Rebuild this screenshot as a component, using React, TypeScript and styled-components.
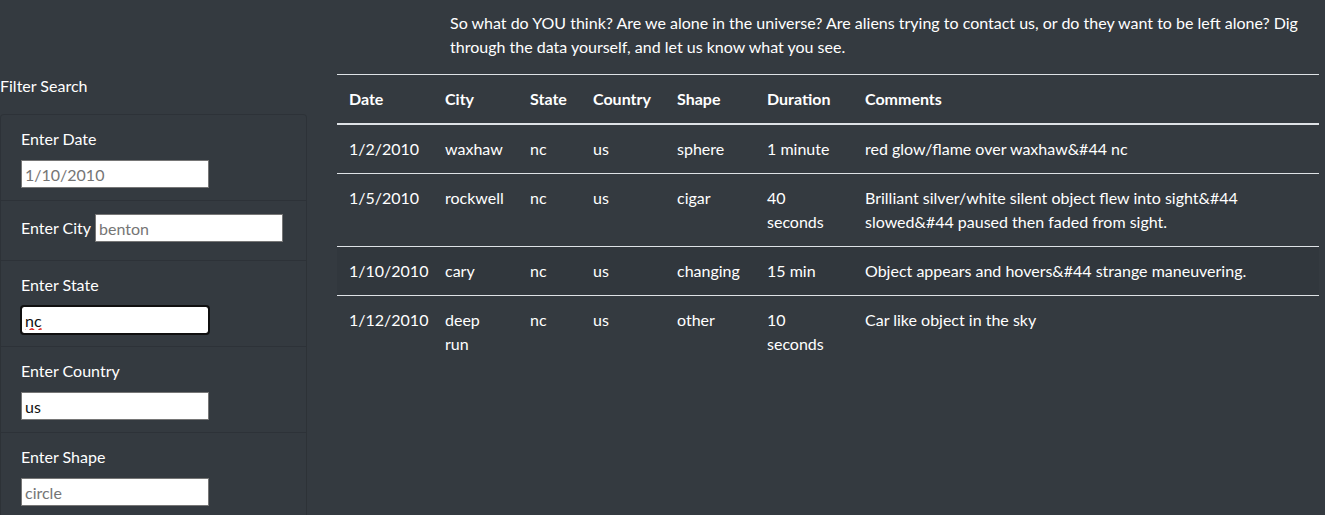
import styled, { createGlobalStyle } from "styled-components";

const GlobalStyle = createGlobalStyle`
  body {
    margin: 0;
    background: #343a40;
    color: #fff;
    font-family: Lato, "Liberation Sans", sans-serif;
    font-size: 16px;
    line-height: 1.5;
  }
`;

const Page = styled.div`
  min-height: 515px;
`;

const Intro = styled.p`
  margin: 0 0 15px;
  padding: 11px 20px 0 450px;
`;

const Main = styled.div`
  display: grid;
  grid-template-columns: 307px 982px;
  column-gap: 30px;
  align-items: start;
`;

const Sidebar = styled.aside``;

const SidebarTitle = styled.div`
  margin-bottom: 16px;
`;

const FilterList = styled.ul`
  list-style: none;
  margin: 0;
  padding: 0;
  border: 1px solid rgba(0, 0, 0, 0.125);
  border-bottom: 0;
  border-radius: 4px 4px 0 0;
`;

const FilterItem = styled.li<{ $inline?: boolean }>`
  display: ${(p) => (p.$inline ? "flex" : "block")};
  align-items: center;
  gap: 4px;
  padding: ${(p) => (p.$inline ? "13px 20px 18px" : "12px 20px")};
  border-bottom: 1px solid rgba(0, 0, 0, 0.125);
`;

const FilterLabel = styled.label<{ $inline?: boolean }>`
  display: block;
  margin-bottom: ${(p) => (p.$inline ? "0" : "9px")};
`;

const FilterInput = styled.input<{ $focused?: boolean }>`
  box-sizing: border-box;
  width: 188px;
  height: 28px;
  padding: 1px 3px;
  font-family: Lato, "Liberation Sans", sans-serif;
  font-size: 16px;
  color: #111;
  background: #fff;
  border: 1px solid #767676;
  border-radius: ${(p) => (p.$focused ? "3px" : "0")};
  outline: ${(p) => (p.$focused ? "2px solid #101010" : "none")};
  outline-offset: -1px;
  text-decoration: ${(p) => (p.$focused ? "underline wavy #e02020" : "none")};

  &::placeholder {
    color: #757575;
  }
`;

const DataTable = styled.table`
  width: 982px;
  border-collapse: collapse;
  table-layout: fixed;
  color: #fff;
`;

const HeadCell = styled.th`
  padding: 12px;
  text-align: left;
  font-weight: 700;
  vertical-align: bottom;
  border-top: 1px solid #dee2e6;
  border-bottom: 2px solid #dee2e6;
`;

const Row = styled.tr<{ $shaded?: boolean }>`
  background: ${(p) => (p.$shaded ? "rgba(0, 0, 0, 0.04)" : "transparent")};
`;

const Cell = styled.td`
  padding: 12px;
  vertical-align: top;
  border-top: 1px solid #dee2e6;
`;

const columns = [
  { label: "Date", width: 96 },
  { label: "City", width: 85 },
  { label: "State", width: 63 },
  { label: "Country", width: 84 },
  { label: "Shape", width: 90 },
  { label: "Duration", width: 98 },
  { label: "Comments", width: 466 },
];

const sightings = [
  ["1/2/2010", "waxhaw", "nc", "us", "sphere", "1 minute", "red glow/flame over waxhaw&#44 nc"],
  [
    "1/5/2010",
    "rockwell",
    "nc",
    "us",
    "cigar",
    "40 seconds",
    "Brilliant silver/white silent object flew into sight&#44 slowed&#44 paused then faded from sight.",
  ],
  ["1/10/2010", "cary", "nc", "us", "changing", "15 min", "Object appears and hovers&#44 strange maneuvering."],
  ["1/12/2010", "deep run", "nc", "us", "other", "10 seconds", "Car like object in the sky"],
];

export default function App() {
  return (
    <Page>
      <GlobalStyle />
      <Intro>
        So what do YOU think? Are we alone in the universe? Are aliens trying to contact us, or do they want to be
        left alone? Dig through the data yourself, and let us know what you see.
      </Intro>
      <Main>
        <Sidebar>
          <SidebarTitle>Filter Search</SidebarTitle>
          <FilterList>
            <FilterItem>
              <FilterLabel htmlFor="date">Enter Date</FilterLabel>
              <FilterInput id="date" placeholder="1/10/2010" />
            </FilterItem>
            <FilterItem $inline>
              <FilterLabel $inline htmlFor="city">Enter City</FilterLabel>
              <FilterInput id="city" placeholder="benton" />
            </FilterItem>
            <FilterItem>
              <FilterLabel htmlFor="state">Enter State</FilterLabel>
              <FilterInput id="state" $focused defaultValue="nc" />
            </FilterItem>
            <FilterItem>
              <FilterLabel htmlFor="country">Enter Country</FilterLabel>
              <FilterInput id="country" defaultValue="us" />
            </FilterItem>
            <FilterItem>
              <FilterLabel htmlFor="shape">Enter Shape</FilterLabel>
              <FilterInput id="shape" placeholder="circle" />
            </FilterItem>
          </FilterList>
        </Sidebar>
        <DataTable>
          <colgroup>
            {columns.map((c) => (
              <col key={c.label} style={{ width: c.width }} />
            ))}
          </colgroup>
          <thead>
            <tr>
              {columns.map((c) => (
                <HeadCell key={c.label}>{c.label}</HeadCell>
              ))}
            </tr>
          </thead>
          <tbody>
            {sightings.map((row, i) => (
              <Row key={row[0]} $shaded={i === 2}>
                {row.map((value, j) => (
                  <Cell key={j}>{value}</Cell>
                ))}
              </Row>
            ))}
          </tbody>
        </DataTable>
      </Main>
    </Page>
  );
}
